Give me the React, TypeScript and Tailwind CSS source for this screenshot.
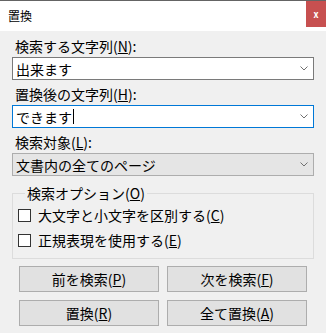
import React from "react";

const FONT = { fontFamily: '"Noto Sans CJK JP", "Noto Sans", sans-serif' };

function Chevron() {
  return (
    <svg width="8" height="5" viewBox="0 0 8 5" className="shrink-0">
      <path d="M0.5 0.5 L4 4 L7.5 0.5" fill="none" stroke="#707070" strokeWidth="1" />
    </svg>
  );
}

function Field({
  label,
  keyChar,
  value,
  variant,
  caret,
  first
}: {
  label: string;
  keyChar: string;
  value: string;
  variant: "edit" | "focus" | "list";
  caret?: boolean;
  first?: boolean;
}) {
  const box =
    variant === "focus"
      ? "border-[#0078d7] bg-white"
      : variant === "list"
      ? "border-[#adadad] bg-[#e5e5e5]"
      : "border-[#7a7a7a] bg-white";
  return (
    <div className={first ? "" : "mt-[5px]"}>
      <div className="pl-[3px] text-[14px] leading-[18px] text-black">
        {label}(<u>{keyChar}</u>):
      </div>
      <div className={`mt-[2px] flex h-[23px] items-center justify-between border pl-[3px] pr-[5px] ${box}`}>
        <span className="flex items-center text-[14px] leading-[18px] text-black">
          {value}
          {caret && <span className="ml-[1px] inline-block h-[15px] w-px bg-black" />}
        </span>
        <Chevron />
      </div>
    </div>
  );
}

function Check({ label, keyChar, className }: { label: string; keyChar: string; className?: string }) {
  return (
    <div className={`flex h-[18px] items-center gap-[7px] ${className ?? ""}`}>
      <span className="h-[13px] w-[13px] shrink-0 border border-[#333333] bg-white" />
      <span className="text-[14px] leading-[18px] text-black">
        {label}(<u>{keyChar}</u>)
      </span>
    </div>
  );
}

function Btn({ label, keyChar }: { label: string; keyChar: string }) {
  return (
    <button
      type="button"
      className="flex h-[26px] w-[140px] items-center justify-center border border-[#adadad] bg-[#e1e1e1] text-[14px] leading-[18px] text-black"
    >
      {label}(<u>{keyChar}</u>)
    </button>
  );
}

export default function App() {
  return (
    <div className="flex h-[333px] w-[326px] flex-col bg-[#f0f0f0]" style={FONT}>
      <div className="flex h-[31px] shrink-0 justify-between border-t border-[#646464] bg-white">
        <span className="pl-[8px] pt-[7px] text-[12px] leading-[16px] text-black">置換</span>
        <div className="flex h-[26px] w-[20px] items-center justify-center bg-[#c75050] text-[9px] font-bold leading-none text-white">
          x
        </div>
      </div>

      <div className="px-[12px] pt-[6px]">
        <Field label="検索する文字列" keyChar="N" value="出来ます" variant="edit" first />
        <Field label="置換後の文字列" keyChar="H" value="できます" variant="focus" caret />
        <Field label="検索対象" keyChar="L" value="文書内の全てのページ" variant="list" />

        <fieldset className="mt-[8px] border border-[#dcdcdc] pb-[9px] pl-[5px]">
          <legend className="ml-[7px] px-[2px] text-[14px] leading-[18px] text-black">
            検索オプション(<u>O</u>)
          </legend>
          <Check label="大文字と小文字を区別する" keyChar="C" className="mt-[4px]" />
          <Check label="正規表現を使用する" keyChar="E" className="mt-[7px]" />
        </fieldset>

        <div className="mt-[7px] flex flex-col gap-[8px]">
          <div className="flex justify-center gap-[8px]">
            <Btn label="前を検索" keyChar="P" />
            <Btn label="次を検索" keyChar="F" />
          </div>
          <div className="flex justify-center gap-[8px]">
            <Btn label="置換" keyChar="R" />
            <Btn label="全て置換" keyChar="A" />
          </div>
        </div>
      </div>
    </div>
  );
}
